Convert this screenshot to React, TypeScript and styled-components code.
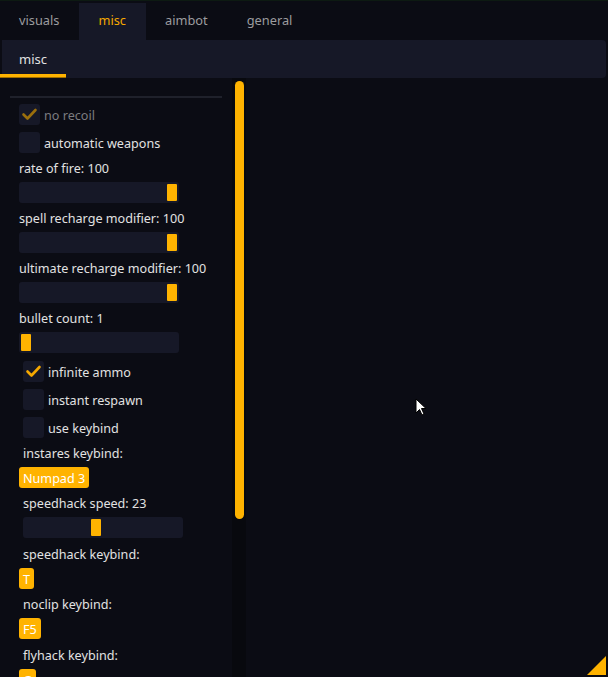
import React, { FC } from 'react';
import styled, { createGlobalStyle } from 'styled-components';

const ACCENT = '#ffb300';
const FRAME = '#161827';
const PAGE = '#0b0c14';

const GlobalStyle = createGlobalStyle`
  html, body {
    margin: 0;
    padding: 0;
    background: ${PAGE};
  }
  body {
    font-family: 'Noto Sans', 'Open Sans', sans-serif;
    font-size: 12.6px;
    color: #e2e2e2;
  }
`;

const Window = styled.div`
  position: relative;
  display: flex;
  flex-direction: column;

  width: 608px;
  height: 677px;
  overflow: hidden;

  background: ${PAGE};
  border-top: 1px solid #0d1a12;
  box-sizing: border-box;
`;

const TabBar = styled.div`
  display: flex;
  align-items: flex-end;

  height: 39px;
`;

const Tab = styled.div<{ $active?: boolean }>`
  display: flex;
  align-items: center;

  height: 37px;
  padding: 0 20px 3px 19px;
  box-sizing: border-box;

  font-size: 12.8px;
  color: ${(p) => (p.$active ? '#f5a800' : '#9c9c9f')};
  background: ${(p) => (p.$active ? FRAME : 'transparent')};
`;

const SubBar = styled.div`
  display: flex;

  height: 38px;
  margin: 0 2px 0 2px;

  background: ${FRAME};
  border-radius: 0 4px 4px 0;
`;

const SubTab = styled.div`
  display: flex;
  flex-direction: column;
  justify-content: center;

  position: relative;
  width: 64px;
  padding-left: 17px;
  box-sizing: border-box;

  font-size: 13px;
  color: #e0e0e0;

  &::after {
    content: '';
    position: absolute;
    left: -2px;
    bottom: 0;
    width: 66px;
    height: 3px;
    background: ${ACCENT};
    border-bottom: 1px solid #a06f00;
  }
`;

const Body = styled.div`
  display: flex;
  flex: 1;
  min-height: 0;
`;

const Child = styled.div`
  width: 232px;
  padding: 18px 0 0 10px;
  box-sizing: border-box;
  overflow: hidden;
`;

const Separator = styled.div`
  width: 212px;
  height: 2px;
  margin-bottom: 6px;
  background: #1f212b;
`;

const Items = styled.div`
  display: flex;
  flex-direction: column;
  align-items: flex-start;

  padding-left: 9px;
`;

const Row = styled.div<{ $indent?: number; $gap?: number }>`
  display: flex;
  align-items: center;

  height: 21px;
  margin-left: ${(p) => p.$indent || 0}px;
  margin-bottom: ${(p) => (p.$gap === undefined ? 4 : p.$gap)}px;

  white-space: nowrap;
`;

const Box = styled.div`
  display: flex;
  align-items: center;
  justify-content: center;

  width: 21px;
  height: 21px;
  margin-right: 4px;

  background: ${FRAME};
  border-radius: 3px;
`;

const Label = styled.span<{ $disabled?: boolean }>`
  padding-top: 2px;
  color: ${(p) => (p.$disabled ? '#7c7c80' : '#e2e2e2')};
`;

const SliderFrame = styled.div`
  position: relative;

  width: 160px;
  height: 21px;

  background: ${FRAME};
  border-radius: 3px;
`;

const Grab = styled.div`
  position: absolute;
  top: 2px;

  width: 10px;
  height: 17px;

  background: ${ACCENT};
  border-radius: 1px;
`;

const KeyButton = styled.div`
  display: flex;
  align-items: center;

  height: 21px;
  padding: 1px 4px 0;
  box-sizing: border-box;

  background: ${ACCENT};
  border-radius: 3px;
  color: #ffffff;
`;

const ScrollTrack = styled.div`
  display: flex;
  justify-content: center;

  width: 14px;
  padding-top: 3px;
  box-sizing: border-box;

  background: #08090e;
`;

const ScrollThumb = styled.div`
  width: 9px;
  height: 438px;

  background: ${ACCENT};
  border-radius: 5px;
`;

const Empty = styled.div`
  flex: 1;
`;

const ResizeGrip = styled.svg`
  position: absolute;
  right: 2px;
  bottom: 2px;
`;

const Cursor = styled.svg`
  position: absolute;
  left: 415px;
  top: 397px;
`;

type Item =
  | { kind: 'check'; label: string; checked?: boolean; disabled?: boolean; indent?: number; gap?: number }
  | { kind: 'text'; label: string; indent?: number; gap?: number }
  | { kind: 'slider'; pos: number; indent?: number; gap?: number }
  | { kind: 'key'; label: string; gap?: number };

const items: Item[] = [
  { kind: 'check', label: 'no recoil', checked: true, disabled: true, gap: 7 },
  { kind: 'check', label: 'automatic weapons' },
  { kind: 'text', label: 'rate of fire: 100' },
  { kind: 'slider', pos: 148 },
  { kind: 'text', label: 'spell recharge modifier: 100' },
  { kind: 'slider', pos: 148 },
  { kind: 'text', label: 'ultimate recharge modifier: 100' },
  { kind: 'slider', pos: 148 },
  { kind: 'text', label: 'bullet count: 1' },
  { kind: 'slider', pos: 2, gap: 8 },
  { kind: 'check', label: 'infinite ammo', checked: true, indent: 4, gap: 7 },
  { kind: 'check', label: 'instant respawn', indent: 4, gap: 7 },
  { kind: 'check', label: 'use keybind', indent: 4 },
  { kind: 'text', label: 'instares keybind:', indent: 4 },
  { kind: 'key', label: 'Numpad 3' },
  { kind: 'text', label: 'speedhack speed: 23', indent: 4 },
  { kind: 'slider', pos: 68, indent: 4, gap: 5 },
  { kind: 'text', label: 'speedhack keybind:', indent: 4 },
  { kind: 'key', label: 'T' },
  { kind: 'text', label: 'noclip keybind:', indent: 4 },
  { kind: 'key', label: 'F5', gap: 5 },
  { kind: 'text', label: 'flyhack keybind:', indent: 4 },
  { kind: 'key', label: 'G' },
];

const Check: FC<{ dim?: boolean }> = ({ dim }) => (
  <svg width="21" height="21" viewBox="0 0 21 21">
    <polyline
      points="4.5,10.5 8.5,14.5 16.5,6"
      fill="none"
      stroke={dim ? '#9b6f0c' : '#f5a800'}
      strokeWidth="2.6"
      strokeLinecap="round"
      strokeLinejoin="round"
    />
  </svg>
);

const renderItem = (item: Item, i: number) => {
  switch (item.kind) {
    case 'check':
      return (
        <Row key={i} $indent={item.indent} $gap={item.gap}>
          <Box>{item.checked ? <Check dim={item.disabled} /> : null}</Box>
          <Label $disabled={item.disabled}>{item.label}</Label>
        </Row>
      );
    case 'text':
      return (
        <Row key={i} $indent={item.indent} $gap={item.gap}>
          <Label>{item.label}</Label>
        </Row>
      );
    case 'slider':
      return (
        <Row key={i} $indent={item.indent} $gap={item.gap}>
          <SliderFrame>
            <Grab style={{ left: item.pos }} />
          </SliderFrame>
        </Row>
      );
    case 'key':
      return (
        <Row key={i} $gap={item.gap}>
          <KeyButton>{item.label}</KeyButton>
        </Row>
      );
  }
};

const App: FC = (): JSX.Element => {
  return (
    <>
      <GlobalStyle />
      <Window>
        <TabBar>
          <Tab>visuals</Tab>
          <Tab $active>misc</Tab>
          <Tab>aimbot</Tab>
          <Tab>general</Tab>
        </TabBar>
        <SubBar>
          <SubTab>misc</SubTab>
        </SubBar>
        <Body>
          <Child>
            <Separator />
            <Items>{items.map(renderItem)}</Items>
          </Child>
          <ScrollTrack>
            <ScrollThumb />
          </ScrollTrack>
          <Empty />
        </Body>
        <ResizeGrip width="19" height="19" viewBox="0 0 19 19">
          <polygon points="19,0 19,19 0,19" fill={ACCENT} />
        </ResizeGrip>
        <Cursor width="13" height="19" viewBox="0 0 13 19">
          <path
            d="M1 1 L1 15 L4.5 11.5 L7 17 L9 16 L6.5 10.5 L11 10.5 Z"
            fill="#ffffff"
            stroke="#000000"
            strokeWidth="1"
          />
        </Cursor>
      </Window>
    </>
  );
};

export default App;
